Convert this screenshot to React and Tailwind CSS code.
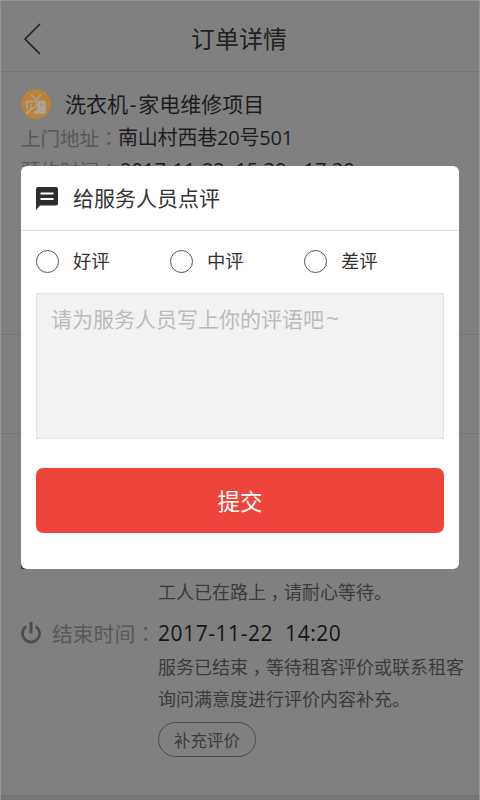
const FONT = "font-['Open_Sans','Noto_Sans_CJK_SC',sans-serif]";

function RepairBadge() {
  return (
    <svg width="30" height="30" viewBox="0 0 30 30" fill="none" className="shrink-0">
      <circle cx="15" cy="15" r="14.8" fill="#bd8239" />
      <path d="M10 5.500l5 5.500 5-5.500" stroke="#a9a49c" strokeWidth="1.500" />
      <path d="M16.500 11.500h7.500a.8.8 0 0 1 .8.8v11.400a.8.8 0 0 1-.8.8H11.500l5-5z" fill="#a9a49c" />
      <path d="M5.800 20v-7.500h11" stroke="#a9a49c" strokeWidth="1.500" />
      <path d="M5.500 24.500l6-6" stroke="#a9a49c" strokeWidth="2.200" />
      <path d="M10 15.200v3.600h3.600l2-2.300v-2.500" stroke="#a9a49c" strokeWidth="1.500" />
      <rect x="19.500" y="14.500" width="2" height="2" fill="#bd8239" />
    </svg>
  );
}

function PowerIcon() {
  return (
    <svg width="20" height="22" viewBox="0 0 20 22" fill="none" stroke="#4c4c4c" className="shrink-0">
      <path d="M5.300 4.500a8.500 8.500 0 1 0 9.400 0" strokeWidth="2.700" />
      <path d="M10 0v11.500" strokeWidth="3" />
    </svg>
  );
}

function Colon() {
  return <span className="font-['Noto_Sans_CJK_TC',sans-serif]">：</span>;
}

// Half-width comma glyph centred in a full-width cell.
function Comma() {
  return <span className="inline-block w-[18px] text-center [font-feature-settings:'halt']">，</span>;
}

function Radio({ label }) {
  return (
    <label className="flex w-[134px] items-center">
      <span className="size-[23px] shrink-0 rounded-full border border-[#555]" />
      <span className="ml-[14px] text-[18.3px] leading-[26px] text-[#333]">{label}</span>
    </label>
  );
}

export default function App() {
  return (
    <div className={`relative flex h-[800px] w-[480px] flex-col overflow-hidden border-x border-t border-[#959595] bg-[#808080] whitespace-nowrap ${FONT}`}>
      <header className="flex h-[71px] shrink-0 items-center border-b border-[#747474]">
        <svg width="18" height="32" viewBox="0 0 18 32" fill="none" stroke="#1c1c1c" strokeWidth="1.5" className="ml-[22px] mt-[6px]">
          <path d="M17 1L2 16l15 15" />
        </svg>
        <h1 className="ml-[150px] mt-[6px] text-[24px] leading-[36px] text-[#222]">订单详情</h1>
      </header>

      <section className="h-[263px] shrink-0 border-b border-[#747474] pl-[20px] pt-[17px]">
        <div className="flex h-[30px] items-center">
          <RepairBadge />
          <span className="ml-[14px] pt-[2px] text-[21px] text-[#1d1d1d]">洗衣机<span className="mx-[1.8px]">-</span>家电维修项目</span>
        </div>
        <p className="mt-[3px] flex h-[32px] items-center text-[20px] text-[#1d1d1d]">
          <span className="w-[97px] text-[19.5px] text-[#595959]">上门地址<Colon /></span>
          <span className="tracking-[-0.2px]">南山村西巷20号501</span>
        </p>
        <p className="flex h-[32px] items-center text-[20px] text-[#1d1d1d]">
          <span className="w-[99px] text-[19.5px] text-[#595959]">预约时间<Colon /></span>
          <span className="tracking-[0.05px]">2017-11-22&nbsp; 15:30 - 17:30</span>
        </p>
      </section>
      <div className="h-[99px] shrink-0 border-b border-[#747474]" />

      <section className="flex grow flex-col pl-[157px] text-[18px] leading-[32px] text-[#3b3b3b]">
        <span className="-ml-[137px] mt-[115px] size-[20px] shrink-0 bg-[#3b3b3b]" />
        <p className="mt-[7px]">工人已在路上<Comma />请耐心等待。</p>
        <div className="-ml-[137px] mt-[9px] flex h-[32px] items-center">
          <PowerIcon />
          <span className="ml-[11px] w-[106px] pt-px text-[20.8px] text-[#595959]">结束时间<Colon /></span>
          <span className="text-[21px] tracking-[0.55px] text-[#151515]">2017-11-22&nbsp; 14:20</span>
        </div>
        <p className="mt-[2px]">服务已结束<Comma />等待租客评价或联系租客</p>
        <p>询问满意度进行评价内容补充。</p>
        <button className="mt-[7px] h-[35px] w-[98px] shrink-0 rounded-full border border-[#4c4c4c] pt-px text-[16.5px] leading-[34px]">补充评价</button>
      </section>
      <footer className="h-[5px] shrink-0 border-t border-[#707070] bg-[#777]" />

      <div className="absolute left-[20px] top-[165px] flex h-[403px] w-[438px] flex-col rounded-[6px] bg-white">
        <div className="flex h-[65px] shrink-0 items-center border-b border-[#e4e4e4] pl-[15px]">
          <svg width="22" height="23" viewBox="0 0 22 23" className="mt-[1px] shrink-0">
            <path d="M2 0h18a2 2 0 0 1 2 2v14.500a2 2 0 0 1-2 2H4L0 23V2a2 2 0 0 1 2-2z" fill="#2d2d2d" />
            <path d="M4.500 6.500h13M4.500 12h13" stroke="#fff" strokeWidth="2" />
          </svg>
          <h2 className="ml-[15px] pt-[2px] text-[21px] text-[#333]">给服务人员点评</h2>
        </div>
        <div className="flex h-[62px] shrink-0 items-center pb-[2px] pl-[15px]">
          <Radio label="好评" />
          <Radio label="中评" />
          <Radio label="差评" />
        </div>
        <div className="mx-[15px] h-[146px] shrink-0 border border-[#e5e5e5] bg-[#f2f2f2] px-[14px] pt-[9px] text-[21px] leading-[32px] text-[#bcbcbc]">请为服务人员写上你的评语吧<span className="ml-[2px] text-[23px] leading-none">~</span></div>
        <button className="mx-[15px] mt-[29px] h-[65px] shrink-0 rounded-[7px] bg-[#ee443c] pt-[3px] text-[22.5px] text-white">提交</button>
      </div>
    </div>
  );
}
